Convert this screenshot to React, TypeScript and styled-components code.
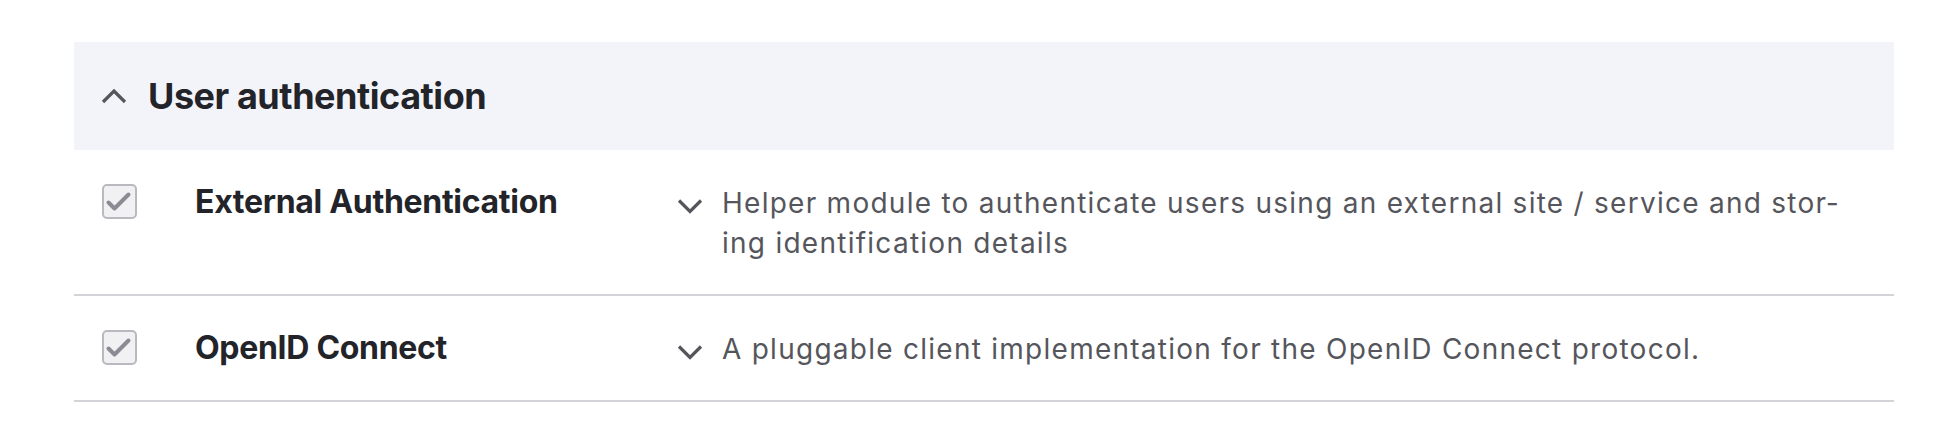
import React from "react";
import styled, { createGlobalStyle } from "styled-components";

const GlobalStyle = createGlobalStyle`
  html, body {
    margin: 0;
    padding: 0;
    background: #ffffff;
  }
  body {
    font-family: Inter, "Noto Sans", "Liberation Sans", sans-serif;
    color: #232429;
    -webkit-font-smoothing: antialiased;
  }
`;

const Page = styled.div`
  padding: 42px 40px 0 74px;
`;

const Section = styled.section`
  display: flex;
  flex-direction: column;
`;

const SummaryBar = styled.div`
  display: flex;
  align-items: center;
  gap: 21px;
  height: 108px;
  padding-left: 27px;
  background: #f3f4f9;
`;

const Title = styled.h2`
  margin: 0;
  font-size: 36px;
  font-weight: 700;
  color: #232429;
  letter-spacing: -0.45px;
`;

const ModuleRow = styled.div`
  display: grid;
  grid-template-columns: 121px 482px 1fr;
  border-bottom: 2px solid #d3d4d9;
`;

const Cell = styled.div`
  padding: 33px 0 31px;
`;

const CheckCell = styled(Cell)`
  padding-left: 28px;
  padding-top: 34px;
`;

const CheckBox = styled.span<{ $checked: boolean }>`
  display: flex;
  align-items: center;
  justify-content: center;
  box-sizing: border-box;
  width: 35px;
  height: 35px;
  border: 2px solid #b9bac0;
  border-radius: 5px;
  background: #f1f1f4;
  color: #8b8c93;
`;

const ModuleName = styled.label`
  display: block;
  font-size: 32px;
  line-height: 37px;
  font-weight: 700;
  color: #232429;
  letter-spacing: -0.3px;
`;

const DescCell = styled(Cell)`
  display: flex;
  align-items: flex-start;
  gap: 19px;
  padding-right: 40px;
`;

const ChevronWrap = styled.span<{ $offset?: number }>`
  flex: none;
  display: flex;
  margin-top: ${(p) => p.$offset ?? 0}px;
  color: #55565c;
`;

const Description = styled.div`
  font-size: 28px;
  line-height: 40px;
  letter-spacing: 1.26px;
  color: #55565c;
`;

const Chevron = ({ up }: { up?: boolean }) => (
  <svg width="26" height="16" viewBox="0 0 26 16" fill="none" aria-hidden="true">
    <polyline
      points={up ? "2,14 13,3 24,14" : "2,2.5 13,13.5 24,2.5"}
      stroke="currentColor"
      strokeWidth="3.2"
      strokeLinecap="butt"
      strokeLinejoin="miter"
    />
  </svg>
);

const CheckMark = () => (
  <svg width="31" height="31" viewBox="0 0 31 31" fill="none" aria-hidden="true">
    <polyline
      points="4.5,16.5 10.5,22.5 24.5,8.5"
      stroke="currentColor"
      strokeWidth="4"
      strokeLinecap="round"
      strokeLinejoin="round"
    />
  </svg>
);

type Module = { name: string; description: string };

const modules: Module[] = [
  {
    name: "External Authentication",
    description:
      "Helper module to authenticate users using an external site / service and stor\u00ADing identification details",
  },
  {
    name: "OpenID Connect",
    description: "A pluggable client implementation for the OpenID Connect protocol.",
  },
];

export default function App() {
  return (
    <>
      <GlobalStyle />
      <Page>
        <Section>
          <SummaryBar>
            <ChevronWrap>
              <Chevron up />
            </ChevronWrap>
            <Title>User authentication</Title>
          </SummaryBar>
          {modules.map((m) => (
            <ModuleRow key={m.name}>
              <CheckCell>
                <CheckBox $checked>
                  <CheckMark />
                </CheckBox>
              </CheckCell>
              <Cell>
                <ModuleName>{m.name}</ModuleName>
              </Cell>
              <DescCell>
                <ChevronWrap $offset={15}>
                  <Chevron />
                </ChevronWrap>
                <Description lang="en">{m.description}</Description>
              </DescCell>
            </ModuleRow>
          ))}
        </Section>
      </Page>
    </>
  );
}
